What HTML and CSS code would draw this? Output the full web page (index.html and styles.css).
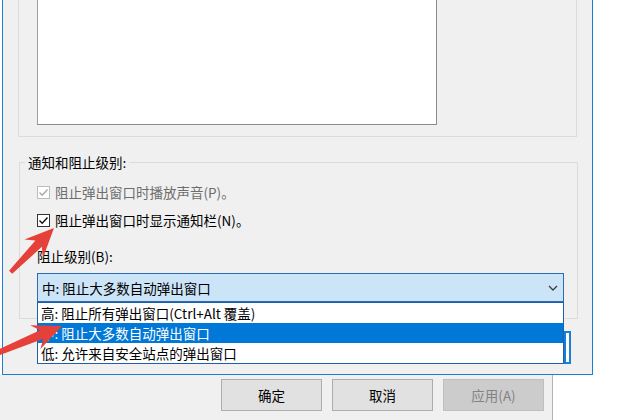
FILE: index.html
```html
<!DOCTYPE html>
<html lang="zh-CN">
<head>
<meta charset="utf-8">
<title>弹出窗口阻止程序设置</title>
<link rel="stylesheet" href="styles.css">
</head>
<body>
<div class="stage">
  <div class="dialog">
    <div class="group-top">
      <div class="listbox"></div>
    </div>
    <fieldset class="group-notify">
      <legend>通知和阻止级别:</legend>
      <label class="check is-disabled">
        <span class="box"><svg viewBox="0 0 13 13" width="13" height="13"><path d="M2.5 6.5 L5.2 9.2 L10.5 3.5" /></svg></span>
        <span>阻止弹出窗口时播放声音(P)。</span>
      </label>
      <label class="check">
        <span class="box"><svg viewBox="0 0 13 13" width="13" height="13"><path d="M2.5 6.5 L5.2 9.2 L10.5 3.5" /></svg></span>
        <span>阻止弹出窗口时显示通知栏(N)。</span>
      </label>
      <div class="field-label">阻止级别(B):</div>
      <div class="combo">
        <span>中: 阻止大多数自动弹出窗口</span>
        <svg class="chevron" viewBox="0 0 10 6" width="10" height="6"><path d="M1 1 L5 5 L9 1" /></svg>
      </div>
    </fieldset>
    <div class="focus-rect"></div>
    <ul class="droplist">
      <li>高: 阻止所有弹出窗口(Ctrl+Alt 覆盖)</li>
      <li class="selected">中: 阻止大多数自动弹出窗口</li>
      <li>低: 允许来自安全站点的弹出窗口</li>
    </ul>
  </div>
  <div class="footer">
    <button class="btn">确定</button>
    <button class="btn">取消</button>
    <button class="btn" disabled>应用(A)</button>
  </div>
  <svg class="arrows" viewBox="0 0 640 420" width="640" height="420">
    <g transform="translate(54 228) rotate(-45.6)">
      <polygon points="0,0 -29,-13 -22,-4.5 -62,-2.2 -62,2.2 -22,4.5 -29,13" />
    </g>
    <g transform="translate(62 326) rotate(-22.7)">
      <polygon points="0,0 -29,-13 -22,-4.5 -80,-2.4 -80,2.4 -22,4.5 -29,13" />
    </g>
  </svg>
</div>
</body>
</html>
```
FILE: styles.css
```css
* { box-sizing: border-box; }

html, body {
  margin: 0;
  padding: 0;
  background: #ffffff;
}

body {
  font-family: "Noto Sans CJK SC", "Microsoft YaHei", sans-serif;
  font-size: 13.5px;
  color: #000000;
}

.stage {
  position: relative;
  width: 640px;
  height: 420px;
  overflow: hidden;
  background: #ffffff;
}

.dialog {
  position: relative;
  margin-left: 2px;
  width: 591px;
  height: 375px;
  background: #f0f0f0;
  border: 1px solid #1a7fd4;
  border-top: none;
}

.group-top {
  margin-left: 15px;
  width: 559px;
  height: 137px;
  border: 1px solid #dcdcdc;
  border-top: none;
}

.listbox {
  margin-left: 18px;
  width: 400px;
  height: 125px;
  background: #ffffff;
  border: 1px solid #a0a0a0;
  border-top: none;
  border-right-color: #8c8c8c;
  border-bottom-color: #8c8c8c;
}

.group-notify {
  margin: 16px 0 0 16px;
  width: 559px;
  padding: 10px 12px 16px 17px;
  border: 1px solid #dcdcdc;
  min-width: 0;
}

.group-notify legend {
  margin-left: -12px;
  padding: 0 3px;
  line-height: 18px;
  height: 18px;
}

.check {
  display: flex;
  align-items: center;
  gap: 5px;
  height: 22px;
  line-height: 20px;
}

.check + .check {
  margin-top: 6px;
}

.box {
  display: block;
  width: 13px;
  height: 13px;
  border: 1px solid #333333;
  background: #ffffff;
  position: relative;
}

.box svg {
  position: absolute;
  left: -1px;
  top: -1px;
  fill: none;
  stroke: #111111;
  stroke-width: 1.4;
}

.check.is-disabled {
  color: #6d6d6d;
}

.check.is-disabled .box {
  border-color: #bcbcbc;
}

.check.is-disabled .box svg {
  stroke: #a8a8a8;
}

.field-label {
  margin-top: 15px;
  height: 20px;
  line-height: 20px;
}

.combo {
  margin-top: 7px;
  width: 527px;
  height: 29px;
  display: flex;
  align-items: center;
  justify-content: space-between;
  padding: 0 5px 0 4px;
  background: #cce4f7;
  border: 1px solid #2a6db5;
  line-height: 20px;
}

.chevron {
  fill: none;
  stroke: #3c3c3c;
  stroke-width: 1.3;
}

.focus-rect {
  position: absolute;
  left: 561px;
  top: 331px;
  width: 7px;
  height: 33px;
  background: #ffffff;
  border: 2px solid #1a7fd4;
}

.droplist {
  position: absolute;
  left: 34px;
  top: 302px;
  width: 527px;
  height: 62px;
  margin: 0;
  padding: 0;
  list-style: none;
  background: #ffffff;
  border: 1px solid #1f5fa8;
}

.droplist li {
  height: 20px;
  line-height: 20px;
  padding-left: 3px;
  white-space: nowrap;
}

.droplist li.selected {
  background: #0078d7;
  color: #ffffff;
}

.footer {
  width: 553px;
  height: 45px;
  background: #f0f0f0;
  border-right: 1px solid #b4b4b4;
  display: flex;
  justify-content: flex-end;
  align-items: flex-start;
  gap: 10px;
  padding: 4px 8px 0 0;
}

.btn {
  width: 101px;
  height: 32px;
  font-family: inherit;
  font-size: 13.5px;
  color: #000000;
  background: #e1e1e1;
  border: 1px solid #adadad;
  padding: 0;
}

.btn:disabled {
  background: #cccccc;
  border-color: #bfbfbf;
  color: #838383;
}

.arrows {
  position: absolute;
  left: 0;
  top: 0;
  pointer-events: none;
  fill: #e5403a;
}
```
